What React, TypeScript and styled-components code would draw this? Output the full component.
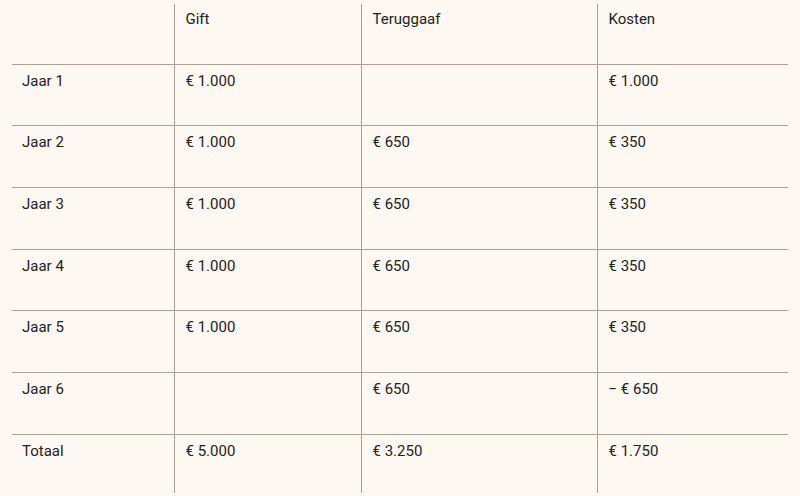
import React from "react";
import styled, { createGlobalStyle } from "styled-components";

const Global = createGlobalStyle`
  html, body { margin: 0; padding: 0; background: #fdf8f2; }
  body { font-family: Roboto, "Noto Sans", sans-serif; color: #222222; }
`;

const Page = styled.div`
  padding: 4px 12px 0 12px;
  width: 776px;
`;

const Table = styled.table`
  width: 776px;
  border-collapse: collapse;
  table-layout: fixed;
  font-size: 15px;
  line-height: 18px;
`;

const Row = styled.tr<{ $h: number; $top?: boolean }>`
  height: ${(p) => p.$h}px;
  border-top: ${(p) => (p.$top ? "1px solid #aca196" : "none")};
`;

const Cell = styled.td<{ $first?: boolean; $head?: boolean }>`
  vertical-align: top;
  padding: ${(p) => (p.$head ? "6px" : "7px")} ${(p) => (p.$first ? "10px" : "11px")} 6px;
  border-left: ${(p) => (p.$first ? "none" : "1px solid #aca196")};
  font-weight: 400;
  text-align: left;
`;

const HeadCell = styled(Cell).attrs({ as: "th", $head: true })``;

const cols = [162, 187, 236, 191];

const data: [string, string, string, string][] = [
  ["Jaar 1", "€ 1.000", "", "€ 1.000"],
  ["Jaar 2", "€ 1.000", "€ 650", "€ 350"],
  ["Jaar 3", "€ 1.000", "€ 650", "€ 350"],
  ["Jaar 4", "€ 1.000", "€ 650", "€ 350"],
  ["Jaar 5", "€ 1.000", "€ 650", "€ 350"],
  ["Jaar 6", "", "€ 650", "− € 650"],
  ["Totaal", "€ 5.000", "€ 3.250", "€ 1.750"],
];

const heights = [61.5, 61.5, 62, 61.5, 61.5, 62, 59];

export default function App() {
  return (
    <>
      <Global />
      <Page>
        <Table>
          <colgroup>
            {cols.map((w, i) => (
              <col key={i} style={{ width: w }} />
            ))}
          </colgroup>
          <thead>
            <Row $h={60}>
              <HeadCell $first></HeadCell>
              <HeadCell>Gift</HeadCell>
              <HeadCell>Teruggaaf</HeadCell>
              <HeadCell>Kosten</HeadCell>
            </Row>
          </thead>
          <tbody>
            {data.map((r, i) => (
              <Row key={i} $h={heights[i]} $top>
                {r.map((c, j) => (
                  <Cell key={j} $first={j === 0}>
                    {c}
                  </Cell>
                ))}
              </Row>
            ))}
          </tbody>
        </Table>
      </Page>
    </>
  );
}
